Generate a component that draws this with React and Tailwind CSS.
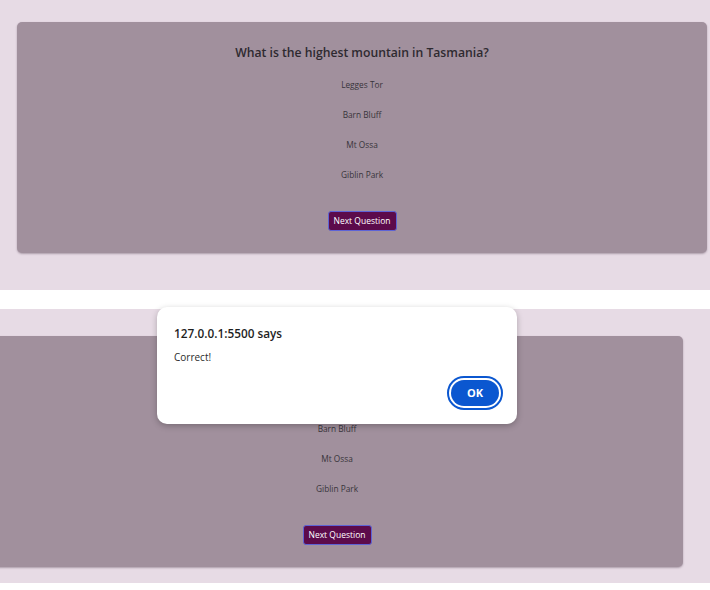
import React from "react";

const options = ["Legges Tor", "Barn Bluff", "Mt Ossa", "Giblin Park"];

function Card({ className }) {
  return (
    <div
      className={
        "bg-[#a1909d] rounded-[5px] shadow-[0_1px_2px_rgba(60,40,60,0.35)] flex flex-col items-center pt-[22px] pb-[22px] " +
        className
      }
    >
      <div className="h-[18px] leading-[18px] text-[12.2px] font-semibold text-[#2e2a30]">
        What is the highest mountain in Tasmania?
      </div>
      <div className="mt-[8px] flex flex-col items-center">
        {options.map((o) => (
          <div key={o} className="h-[30px] leading-[30px] text-[8.3px] text-[#38343b]">
            {o}
          </div>
        ))}
      </div>
      <button className="mt-[21px] h-[20px] w-[69px] bg-[#5c0b4b] border border-[#5d63d6] rounded-[3px] text-white text-[8.5px] leading-[18px]">
        Next Question
      </button>
    </div>
  );
}

export default function App() {
  return (
    <div
      className="relative w-[710px] h-[590px] bg-white overflow-hidden flex flex-col"
      style={{ fontFamily: '"Open Sans", "Noto Sans", sans-serif' }}
    >
      <section className="h-[290px] bg-[#e7dbe5] pt-[22px] pl-[17px] pr-[3px]">
        <Card className="w-[690px]" />
      </section>
      <div className="h-[19px]" />
      <section className="h-[274px] bg-[#e7dbe5] pt-[27px]">
        <Card className="w-[692px] ml-[-9px]" />
      </section>

      <div className="absolute left-[157px] top-[307px] w-[360px] h-[117px] bg-white rounded-[10px] shadow-[0_2px_6px_rgba(0,0,0,0.25)] flex flex-col">
        <div className="pl-[17px] pt-[17px] h-[18px] leading-[18px] text-[11.8px] font-semibold text-[#1f1f1f] box-content">
          127.0.0.1:5500 says
        </div>
        <div className="pl-[17px] mt-[8px] h-[14px] leading-[14px] text-[10px] text-[#2b2b2b]">
          Correct!
        </div>
        <div className="flex justify-end pr-[14px] mt-[12px]">
          <div className="w-[56px] h-[34px] rounded-full border-2 border-[#0b57d0] p-[2px] bg-white">
            <div className="w-full h-full rounded-full bg-[#0b57d0] text-white text-[11px] font-bold flex items-center justify-center">
              OK
            </div>
          </div>
        </div>
      </div>
    </div>
  );
}
